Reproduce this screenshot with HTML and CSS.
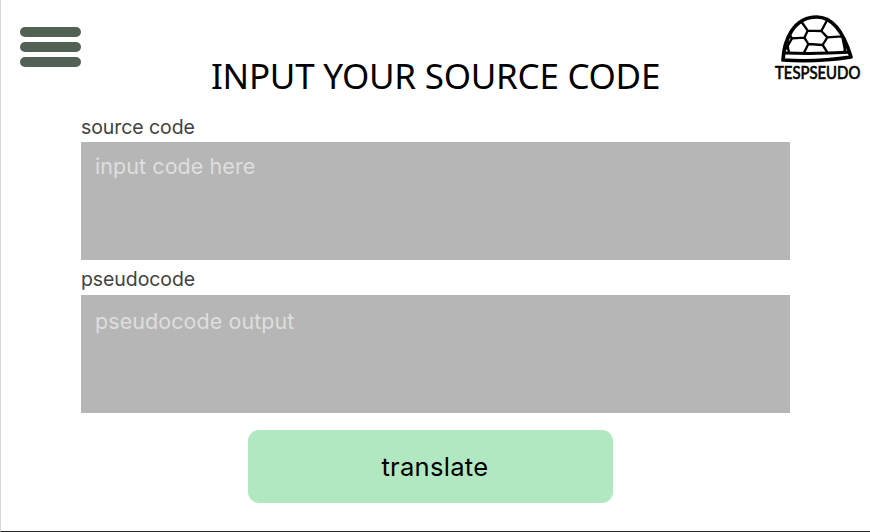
FILE: index.html
```html
<!DOCTYPE html>
<html lang="en">
<head>
<meta charset="utf-8">
<title>Tespseudo</title>
<link rel="stylesheet" href="styles.css">
</head>
<body>
<div class="page">
  <header class="header">
    <div class="menu" role="button" aria-label="Menu"><span></span><span></span><span></span></div>
    <h1 class="title">INPUT YOUR SOURCE CODE</h1>
    <svg class="logo" viewBox="0 0 315 255" fill="none" stroke="#000" stroke-linejoin="round" stroke-linecap="round">
      <path stroke-width="11" d="M54 165C57 105 86 36 155 36C211 36 242 102 258 156Q155 172 54 165Z"/>
      <path stroke-width="9" d="M60 144Q156 147 250 142"/>
      <path stroke-width="7" d="M110 51L128 77L169 78L185 48M128 77L118 98L130 117L173 120L187 97L169 78M118 98L81 100L73 87M187 97L231 94M130 117L117 143M173 120L187 142M81 100L68 123L72 143M80 98L71 93L62 132M231 94L243 124L237 141M232 95L241 140"/>
      <text class="brand" x="30" y="223" textLength="256" lengthAdjust="spacingAndGlyphs">TESPSEUDO</text>
    </svg>
  </header>
  <main class="form">
    <label class="label" for="source">source code</label>
    <textarea class="box" id="source" placeholder="input code here"></textarea>
    <label class="label second" for="output">pseudocode</label>
    <textarea class="box output" id="output" placeholder="pseudocode output" readonly></textarea>
    <button class="translate">translate</button>
  </main>
</div>
</body>
</html>
```
FILE: styles.css
```css
* { box-sizing: border-box; }
body { margin: 0; background: #fff; font-family: Inter, "Liberation Sans", sans-serif; }
.page { height: 532px; overflow: hidden; border-left: 1px solid #d6d6d6; border-bottom: 1px solid #242424; }
.header { display: flex; align-items: flex-start; height: 115px; padding-left: 19.4px; }
.menu { display: flex; flex-direction: column; gap: 5px; width: 61px; margin-top: 27px; }
.menu span { height: 10px; border-radius: 5px; background: #536154; }
.title { margin: 52px 0 0 129.6px; width: 554px; font: 400 35px/48px "Noto Sans", sans-serif; letter-spacing: -0.27px; color: #000; white-space: nowrap; }
.logo { width: 105px; height: 85px; margin-top: 5px; flex: none; display: block; }
.brand { font: 400 49px Lato, sans-serif; fill: #000; stroke-width: 2; }
.form { display: flex; flex-direction: column; margin-left: 80px; width: 710px; }
.label { height: 27.4px; line-height: 25px; font-size: 19.5px; letter-spacing: -0.08px; color: #424242; }
.second { height: 35.4px; line-height: 39px; }
.box { display: block; width: 709.4px; height: 117.7px; margin: 0; padding: 11px 14px; border: 0; border-radius: 0; outline: 0; resize: none; background: #b6b6b6; font: 400 21.5px/26px Inter, sans-serif; letter-spacing: 0.07px; }
.box::placeholder { color: #dedede; opacity: 1; }
.output { padding-top: 13px; }
.translate { width: 365px; height: 73px; margin: 16.6px 0 0 167.4px; padding: 1px 0 0 8px; border: 0; border-radius: 11px; background: #b1e8c1; color: #000; font: 400 25.6px/30px Inter, sans-serif; letter-spacing: 0.25px; }
```
